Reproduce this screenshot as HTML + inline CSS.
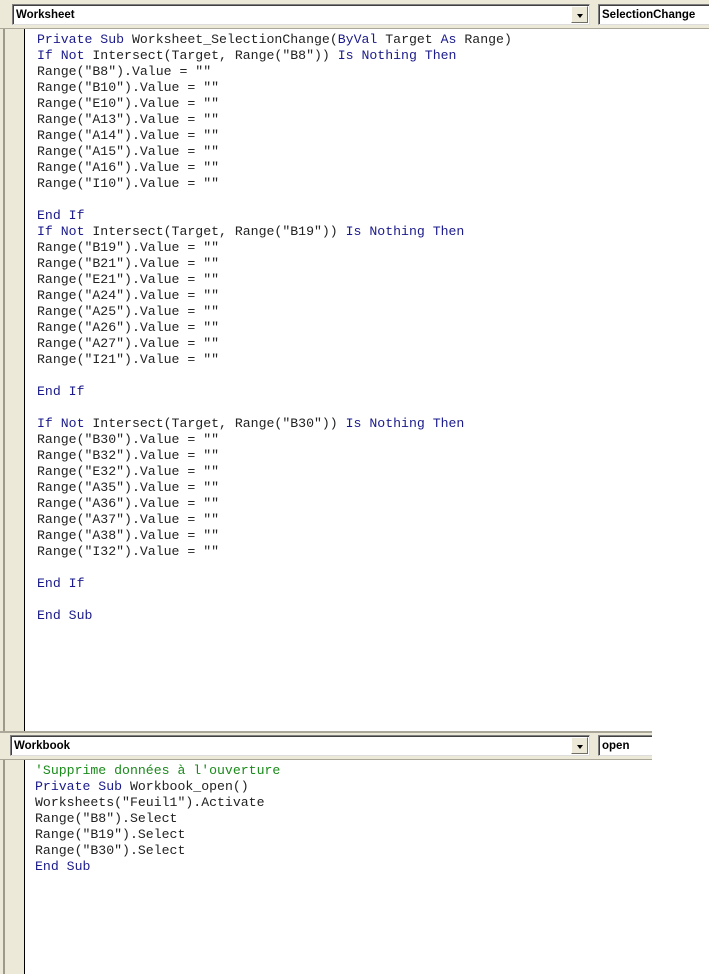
<!DOCTYPE html>
<html><head><meta charset="utf-8"><style>
*{margin:0;padding:0;box-sizing:border-box}
body{width:709px;height:974px;background:#fff;position:relative;overflow:hidden;font-family:"Liberation Sans",sans-serif}
.bar{position:absolute;left:0;background:#ece9d8;border-bottom:1px solid #aca899}
.combo{position:absolute;background:#fff;border:1px solid #7f7f7f;border-right-color:#ddd;border-bottom-color:#ddd;box-shadow:inset 1px 1px 0 #404040;font-weight:bold;font-size:11.5px;padding:4px 0 0 3px;color:#000}
.btn{position:absolute;background:#ece9d8;border:1px solid #fff;border-right-color:#716f64;border-bottom-color:#716f64}
.btn:after{content:"";position:absolute;left:5px;top:7px;border-left:3.5px solid transparent;border-right:3.5px solid transparent;border-top:4px solid #000}
.margin{position:absolute;left:0;width:25px;background:#ece9d8;border-right:1px solid #000}
.margin:before{content:"";position:absolute;left:3px;top:0;bottom:0;width:2px;background:#9d9a8c}
pre{position:absolute;font-family:"Liberation Mono",monospace;font-size:13.2px;line-height:16px;color:#222}
.k{color:#1a1a8a}.c{color:#1a8a1a}
</style></head><body>
<div class="bar" style="top:0;width:709px;height:29px"></div>
<div class="combo" style="left:12px;top:4px;width:578px;height:21px">Worksheet</div>
<div class="btn" style="left:571px;top:6px;width:17px;height:17px"></div>
<div class="combo" style="left:598px;top:4px;width:115px;height:21px">SelectionChange</div>
<div class="margin" style="top:29px;height:702px"></div>
<pre style="left:37px;top:32px"><span class="k">Private Sub</span> Worksheet_SelectionChange(<span class="k">ByVal</span> Target <span class="k">As</span> Range)
<span class="k">If Not</span> Intersect(Target, Range("B8")) <span class="k">Is Nothing Then</span>
Range("B8").Value = ""
Range("B10").Value = ""
Range("E10").Value = ""
Range("A13").Value = ""
Range("A14").Value = ""
Range("A15").Value = ""
Range("A16").Value = ""
Range("I10").Value = ""

<span class="k">End If</span>
<span class="k">If Not</span> Intersect(Target, Range("B19")) <span class="k">Is Nothing Then</span>
Range("B19").Value = ""
Range("B21").Value = ""
Range("E21").Value = ""
Range("A24").Value = ""
Range("A25").Value = ""
Range("A26").Value = ""
Range("A27").Value = ""
Range("I21").Value = ""

<span class="k">End If</span>

<span class="k">If Not</span> Intersect(Target, Range("B30")) <span class="k">Is Nothing Then</span>
Range("B30").Value = ""
Range("B32").Value = ""
Range("E32").Value = ""
Range("A35").Value = ""
Range("A36").Value = ""
Range("A37").Value = ""
Range("A38").Value = ""
Range("I32").Value = ""

<span class="k">End If</span>

<span class="k">End Sub</span></pre>
<div class="bar" style="top:731px;width:652px;height:29px;border-top:2px solid #aca899"></div>
<div class="combo" style="left:10px;top:735px;width:580px;height:21px">Workbook</div>
<div class="btn" style="left:571px;top:737px;width:17px;height:17px"></div>
<div class="combo" style="left:598px;top:735px;width:54px;height:21px;border-right:none">open</div>
<div class="margin" style="top:760px;height:214px"></div>
<pre style="left:35px;top:763px"><span class="c">'Supprime données à l'ouverture</span>
<span class="k">Private Sub</span> Workbook_open()
Worksheets("Feuil1").Activate
Range("B8").Select
Range("B19").Select
Range("B30").Select
<span class="k">End Sub</span></pre>
</body></html>
